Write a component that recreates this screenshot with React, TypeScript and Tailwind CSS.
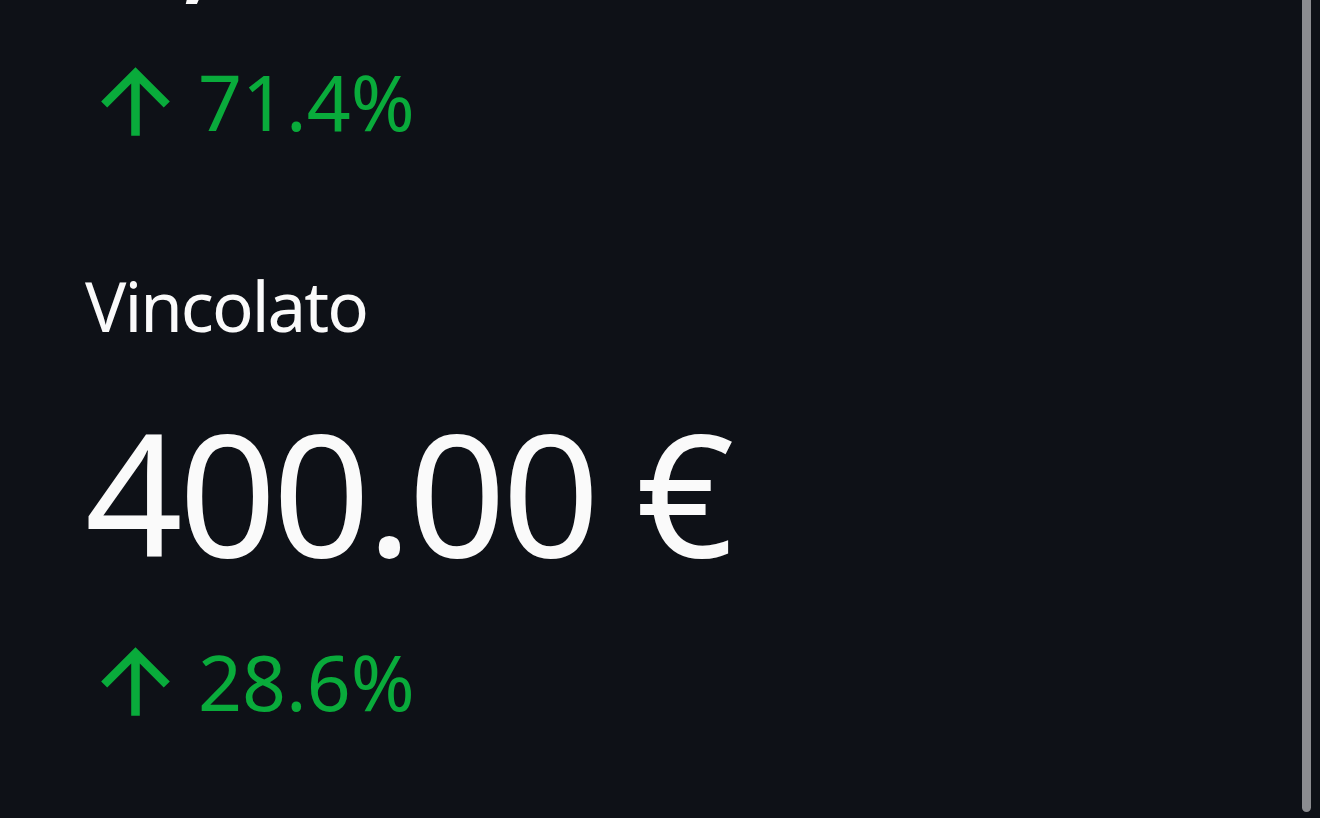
const metrics = [
  { label: null, value: '1,000.00 €', delta: '71.4%' },
  { label: 'Vincolato', value: '400.00 €', delta: '28.6%' },
]

function ArrowUp() {
  return (
    <svg viewBox="0 0 24 24" className="h-[103px] w-[103px] shrink-0 fill-[#09ab3b]">
      <path d="M4 12l1.41 1.41L11 7.83V20h2V7.83l5.58 5.59L20 12l-8-8-8 8z" />
    </svg>
  )
}

function Metric({ label, value, delta }: { label: string | null; value: string; delta: string }) {
  return (
    <div className="flex flex-col">
      {label && (
        <div className="mb-[65px] text-[69px] leading-none tracking-[-2px] text-[#fafafa]">{label}</div>
      )}
      <div className="text-[171px] leading-none tracking-[-4px] text-[#fafafa] whitespace-nowrap">{value}</div>
      <div
        className={
          label
            ? 'mt-[54px] flex h-[103px] items-center gap-[11px] -ml-[1px] text-[#09ab3b]'
            : 'mt-[49px] flex h-[103px] items-center gap-[11px] -ml-[1px] text-[#09ab3b]'
        }
      >
        <ArrowUp />
        <span className="text-[77px] leading-none">{delta}</span>
      </div>
    </div>
  )
}

export default function App() {
  return (
    <div
      className="relative h-[818px] w-[1320px] overflow-hidden bg-[#0e1117]"
      style={{ fontFamily: '"Noto Sans", "Open Sans", sans-serif' }}
    >
      <div className="-mt-[170px] flex flex-col gap-[118px] pl-[85px]">
        {metrics.map((m) => (
          <Metric key={m.value} {...m} />
        ))}
      </div>
      <div className="absolute left-[1302px] top-0 h-[812px] w-[9px] rounded-b-full bg-[#8b8c90]" />
    </div>
  )
}
